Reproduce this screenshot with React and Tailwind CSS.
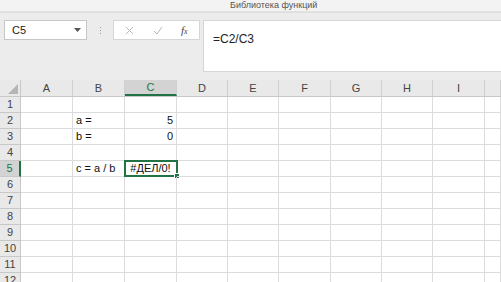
import React from "react";

const COLS = [
  { l: "A", w: "w-[52px]" },
  { l: "B", w: "w-[52px]" },
  { l: "C", w: "w-[52px]" },
  { l: "D", w: "w-[51px]" },
  { l: "E", w: "w-[51px]" },
  { l: "F", w: "w-[52px]" },
  { l: "G", w: "w-[51px]" },
  { l: "H", w: "w-[51px]" },
  { l: "I", w: "w-[52px]" },
  { l: "", w: "flex-1" },
];

const DATA = {
  "2B": { t: "a =", a: "left" },
  "2C": { t: "5", a: "right" },
  "3B": { t: "b =", a: "left" },
  "3C": { t: "0", a: "right" },
  "5B": { t: "c = a / b", a: "left" },
  "5C": { t: "#ДЕЛ/0!", a: "center" },
};

function Cell({ col, row }) {
  const d = DATA[`${row}${col.l}`];
  const sel = row === 5 && col.l === "C";
  const align =
    d?.a === "right" ? "justify-end" : d?.a === "center" ? "justify-center" : "justify-start";
  return (
    <div
      className={`${col.w} shrink-0 h-full border-r border-b border-[#dcdcdc] relative flex items-center px-[3px] ${align} text-[11px] text-[#111]`}
    >
      {d && <span className="leading-none whitespace-nowrap">{d.t}</span>}
      {sel && (
        <>
          <div className="absolute left-[-1px] top-[-1px] right-[-2px] bottom-[-1px] border-2 border-[#217346]" />
          <div className="absolute right-[-4px] bottom-[-3px] w-[6px] h-[6px] bg-[#217346] border border-white" />
        </>
      )}
    </div>
  );
}

export default function App() {
  const rows = [1, 2, 3, 4, 5, 6, 7, 8, 9, 10, 11, 12];
  return (
    <div
      className="w-[501px] h-[282px] overflow-hidden bg-white flex flex-col"
      style={{ fontFamily: '"Liberation Sans", Arial, sans-serif' }}
    >
      {/* title bar */}
      <div className="h-[11px] shrink-0 bg-[#f3f3f3] flex items-center">
        <span className="ml-[230px] text-[9px] leading-none text-[#555]">Библиотека функций</span>
      </div>
      <div className="h-[2px] shrink-0 bg-[#e0e0e0]" />

      {/* formula bar */}
      <div className="h-[67px] shrink-0 bg-[#ececec] flex items-start pt-[7px]">
        <div className="ml-[4px] w-[83px] h-[20px] bg-white border border-[#c6c6c6] flex items-center pl-[7px] pr-[5px]">
          <span className="text-[11px] text-[#222] leading-none">C5</span>
          <svg className="ml-auto" width="7" height="4" viewBox="0 0 7 4">
            <path d="M0 0 L7 0 L3.5 4 Z" fill="#555" />
          </svg>
        </div>
        <div className="w-[26px] h-[20px] flex flex-col items-center justify-center gap-[2px]">
          <div className="w-[1px] h-[1px] bg-[#9a9a9a]" />
          <div className="w-[1px] h-[1px] bg-[#9a9a9a]" />
          <div className="w-[1px] h-[1px] bg-[#9a9a9a]" />
        </div>
        <div className="w-[87px] h-[20px] bg-white border border-[#d6d6d6] flex items-center">
          <svg className="ml-[11px]" width="9" height="9" viewBox="0 0 9 9">
            <path d="M1 1 L8 8 M8 1 L1 8" stroke="#b8b8b8" strokeWidth="1" fill="none" />
          </svg>
          <svg className="ml-[19px]" width="10" height="9" viewBox="0 0 10 9">
            <path d="M1 5 L4 8 L9 1" stroke="#b8b8b8" strokeWidth="1" fill="none" />
          </svg>
          <span
            className="ml-[18px] italic text-[11px] leading-none text-[#444]"
            style={{ fontFamily: '"Liberation Serif", serif' }}
          >
            f<span className="text-[8px]">x</span>
          </span>
        </div>
        <div className="ml-[3px] flex-1 h-[52px] bg-white border-l border-t border-b border-[#d6d6d6] pl-[9px] pt-[5px]">
          <span className="text-[12px] text-[#222] leading-none">=C2/C3</span>
        </div>
      </div>

      {/* column header */}
      <div className="h-[17px] shrink-0 flex bg-[#e9e9e9] border-b border-[#c8c8c8]">
        <div className="w-[21px] shrink-0 h-full border-r border-[#c8c8c8] relative">
          <svg className="absolute right-[2px] bottom-[2px]" width="10" height="10" viewBox="0 0 10 10">
            <path d="M10 0 L10 10 L0 10 Z" fill="#b5b5b5" />
          </svg>
        </div>
        {COLS.map((c, i) => (
          <div
            key={i}
            className={`${c.w} shrink-0 h-full border-r border-[#d0d0d0] flex items-center justify-center text-[11px] leading-none ${
              c.l === "C"
                ? "bg-[#d3d3d3] text-[#217346] border-b-2 border-b-[#217346]"
                : "text-[#444]"
            }`}
          >
            {c.l}
          </div>
        ))}
      </div>

      {/* rows */}
      {rows.map((r) => (
        <div key={r} className="h-[16px] shrink-0 flex">
          <div
            className={`w-[21px] shrink-0 h-full border-b border-[#c8c8c8] flex items-center justify-center text-[11px] leading-none ${
              r === 5
                ? "bg-[#d3d3d3] text-[#217346] border-r-2 border-r-[#217346]"
                : "bg-[#e9e9e9] text-[#444] border-r border-r-[#c8c8c8]"
            }`}
          >
            {r}
          </div>
          {COLS.map((c, i) => (
            <Cell key={i} col={c} row={r} />
          ))}
        </div>
      ))}
    </div>
  );
}
